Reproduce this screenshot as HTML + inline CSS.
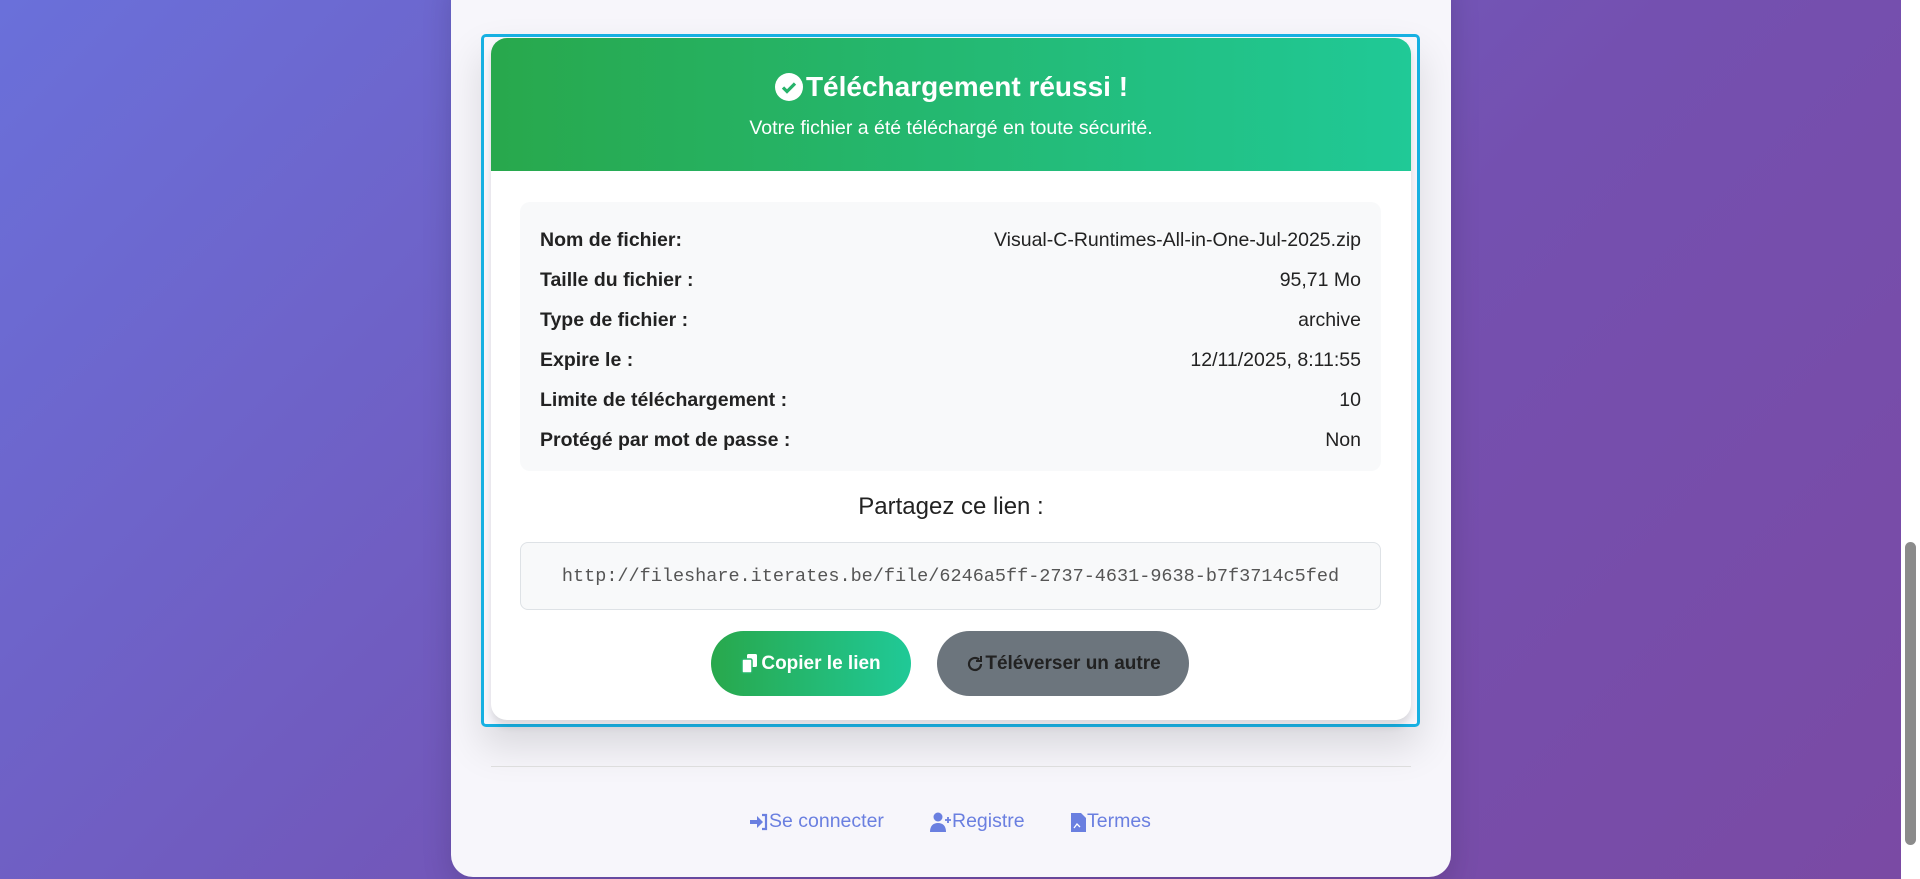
<!DOCTYPE html>
<html><head><meta charset="utf-8"><style>
*{box-sizing:border-box;margin:0;padding:0}
html,body{width:1920px;height:879px;overflow:hidden}
body{font-family:"Liberation Sans",sans-serif;background:linear-gradient(135deg,#6a70da 0%,#7450b0 60%,#7a4aa4 100%);position:relative}
.panel{position:absolute;left:451px;top:-30px;width:1000px;height:907px;background:#f7f6fb;border-radius:22px;box-shadow:0 10px 30px rgba(0,0,0,.15)}
.outline{position:absolute;left:481px;top:34px;width:939px;height:693px;border:3px solid #17b0e2;border-radius:5px;box-shadow:0 20px 40px rgba(0,0,0,.12)}
.card{position:absolute;left:491px;top:38px;width:920px;height:682px;background:#fff;border-radius:16px;overflow:hidden;box-shadow:0 6px 8px rgba(0,0,0,.12)}
.head{height:133px;background:linear-gradient(90deg,#28a84c,#20c997);color:#fff;text-align:center}
.head h1{font-size:28px;font-weight:bold;padding-top:33px;display:flex;align-items:center;justify-content:center;gap:2px}
.head p{font-size:19.5px;margin-top:14px}
.info{position:absolute;left:29px;top:164px;width:861px;height:269px;background:#f8f9fa;border-radius:10px;padding:18px 20px}
.row{display:flex;justify-content:space-between;height:40px;align-items:center;font-size:19.5px;color:#222}
.row b{font-weight:bold}
.share{position:absolute;top:455px;width:100%;text-align:center;font-size:24px;color:#222}
.link{position:absolute;left:29px;top:504px;width:861px;height:68px;border:1px solid #dee2e6;border-radius:8px;background:#f8f9fa;font-family:"Liberation Mono",monospace;font-size:18.5px;color:#555;display:flex;align-items:center;justify-content:center}
.btn{position:absolute;top:593px;height:65px;border-radius:33px;display:flex;align-items:center;justify-content:center;font-size:19px;font-weight:bold}
.b1{left:220px;width:200px;background:linear-gradient(90deg,#28a84c,#20c997);color:#fff}
.b2{left:446px;width:252px;background:#6c757d;color:#222}
.div{position:absolute;left:491px;top:766px;width:920px;height:1px;background:#ddd}
.foot{position:absolute;top:810px;font-size:19.5px;color:#6a7fe0;display:flex;align-items:center}
.sb{position:absolute;right:0;top:0;width:19px;height:879px;background:#fff}
.thumb{position:absolute;right:4px;top:542px;width:11px;height:303px;background:#8b8b8b;border-radius:6px}
</style></head><body>
<div class="panel"></div>
<div class="outline"></div>
<div class="card">
<div class="head"><h1><svg width="30" height="30" viewBox="0 0 30 30"><circle cx="15" cy="15" r="14" fill="#fff"/><path d="M9 15.5l4 4 8-8" stroke="#26b36a" stroke-width="3.2" fill="none"/></svg>Téléchargement réussi !</h1><p>Votre fichier a été téléchargé en toute sécurité.</p></div>
<div class="info">
<div class="row"><b>Nom de fichier:</b><span>Visual-C-Runtimes-All-in-One-Jul-2025.zip</span></div>
<div class="row"><b>Taille du fichier :</b><span>95,71 Mo</span></div>
<div class="row"><b>Type de fichier :</b><span>archive</span></div>
<div class="row"><b>Expire le :</b><span>12/11/2025, 8:11:55</span></div>
<div class="row"><b>Limite de téléchargement :</b><span>10</span></div>
<div class="row"><b>Protégé par mot de passe :</b><span>Non</span></div>
</div>
<div class="share">Partagez ce lien :</div>
<div class="link">http://fileshare.iterates.be/file/6246a5ff-2737-4631-9638-b7f3714c5fed</div>
<div class="btn b1"><svg width="20" height="22" viewBox="0 0 20 22"><rect x="6" y="1" width="10" height="13" rx="1.5" fill="#fff"/><rect x="1" y="6" width="10" height="14" rx="1.5" fill="#fff" stroke="#27b56a" stroke-width="1.5"/></svg>Copier le lien</div>
<div class="btn b2"><svg width="20" height="20" viewBox="0 0 20 20"><path d="M16 10a6 6 0 1 1-2-4.5" stroke="#222" stroke-width="2.2" fill="none"/><path d="M16 2v5h-5" stroke="#222" stroke-width="2" fill="none"/></svg>Téléverser un autre</div>
</div>
<div class="div"></div>
<div class="foot" style="left:749px"><svg width="20" height="18" viewBox="0 0 20 18"><path d="M1 7h7V3l6 6-6 6v-4H1z" fill="#6a7fe0"/><path d="M13 2h4v14h-4" stroke="#6a7fe0" stroke-width="2.2" fill="none"/></svg>Se connecter</div>
<div class="foot" style="left:930px"><svg width="22" height="20" viewBox="0 0 22 20"><circle cx="8" cy="5" r="4.5" fill="#6a7fe0"/><path d="M0 20c0-6 3-9 8-9s8 3 8 9z" fill="#6a7fe0"/><path d="M18 5v6M15 8h6" stroke="#6a7fe0" stroke-width="1.8"/></svg>Registre</div>
<div class="foot" style="left:1071px"><svg width="16" height="20" viewBox="0 0 16 20"><path d="M0 1h10l5 5v14H0z" fill="#6a7fe0"/><path d="M3 16l3-4 3 3" stroke="#fff" stroke-width="1.3" fill="none"/></svg>Termes</div>
<div class="sb"><div class="thumb"></div></div>
</body></html>
